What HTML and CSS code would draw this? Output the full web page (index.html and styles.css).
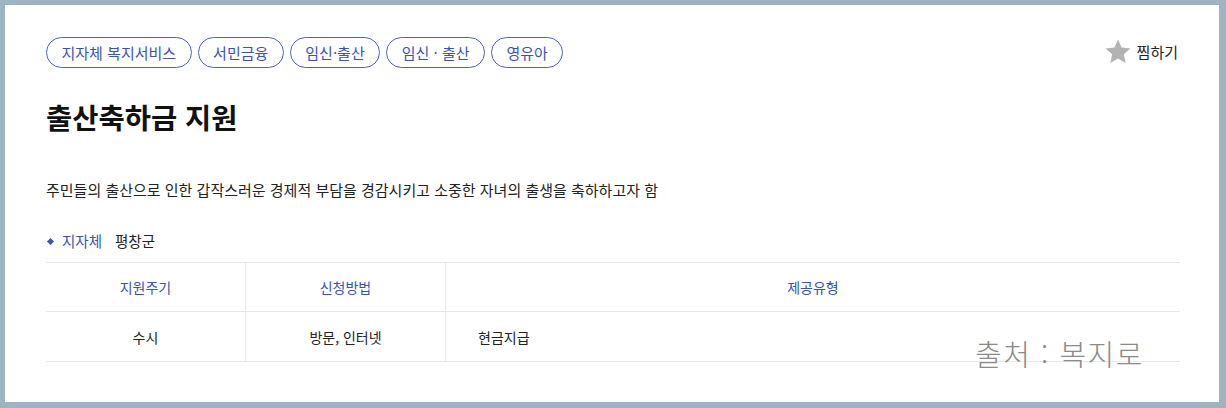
FILE: index.html
```html
<!DOCTYPE html>
<html lang="ko">
<head>
<meta charset="utf-8">
<link rel="stylesheet" href="styles.css">
</head>
<body>
<div class="frame">
  <div class="card">
    <div class="top">
      <ul class="tags">
        <li class="tag">지자체 복지서비스</li>
        <li class="tag">서민금융</li>
        <li class="tag">임신·출산</li>
        <li class="tag">임신 · 출산</li>
        <li class="tag">영유아</li>
      </ul>
      <div class="fav">
        <svg class="star" width="26" height="25" viewBox="0 0 26 25"><path d="M13 0.5l3.6 8 8.8 0.9-6.6 5.9 1.9 8.7L13 19.5 5.3 24l1.9-8.7L0.6 9.4l8.8-0.9z" fill="#b3b3b3"/></svg>
        <span>찜하기</span>
      </div>
    </div>
    <h1 class="title">출산축하금 지원</h1>
    <p class="desc">주민들의 출산으로 인한 갑작스러운 경제적 부담을 경감시키고 소중한 자녀의 출생을 축하하고자 함</p>
    <div class="meta"><span class="bullet"></span><span class="meta-label">지자체</span><span class="meta-value">평창군</span></div>
    <div class="table">
      <div class="cell head">지원주기</div>
      <div class="cell head">신청방법</div>
      <div class="cell head">제공유형</div>
      <div class="cell">수시</div>
      <div class="cell">방문, 인터넷</div>
      <div class="cell left">현금지급</div>
    </div>
    <div class="watermark">출처 : 복지로</div>
  </div>
</div>
</body>
</html>
```

FILE: styles.css
```css
* { box-sizing: border-box; }
html, body { margin: 0; padding: 0; }
body {
  background: #9fb4c3;
  font-family: "Noto Sans CJK KR", "Noto Sans", sans-serif;
  color: #222;
}
.frame {
  width: 1226px;
  height: 408px;
  padding: 5px 7px 6px 5px;
}
.card {
  position: relative;
  background: #fff;
  height: 100%;
  padding: 32px 39px 0 41px;
}
.top {
  display: flex;
  justify-content: space-between;
  align-items: flex-start;
}
.tags {
  display: flex;
  gap: 6px;
  list-style: none;
  margin: 0;
  padding: 0;
}
.tag {
  height: 31px;
  line-height: 29px;
  padding: 0 14.5px;
  border: 1px solid #4b63bf;
  border-radius: 16px;
  color: #3a52b4;
  font-size: 15px;
}
.fav {
  display: flex;
  align-items: center;
  gap: 6px;
  font-size: 15px;
  color: #222;
  height: 28px;
  margin-right: 2px;
}
.star { display: block; }
.title {
  margin: 30px 0 0;
  font-size: 28.5px;
  font-weight: 700;
  line-height: 38px;
  color: #111;
}
.desc {
  margin: 43px 0 0;
  font-size: 15px;
  line-height: 22px;
  color: #222;
}
.meta {
  display: flex;
  align-items: center;
  margin-top: 29px;
  font-size: 14px;
  line-height: 22px;
}
.bullet {
  width: 5px;
  height: 5px;
  background: #3d55b3;
  transform: rotate(45deg);
  margin: 0 9px 0 2px;
}
.meta-label { color: #3a52b4; margin-right: 13px; font-size: 14.5px; }
.meta-value { color: #222; font-size: 14.5px; }
.table {
  display: grid;
  grid-template-columns: 200px 200px 1fr;
  margin-top: 10px;
  border-top: 1px solid #e8e8e8;
}
.cell {
  height: 50px;
  display: flex;
  align-items: center;
  justify-content: center;
  font-size: 14px;
  border-bottom: 1px solid #e8e8e8;
  border-right: 1px solid #e8e8e8;
  color: #222;
}
.cell:nth-child(3n) { border-right: none; }
.cell.head { color: #3a52b4; height: 49px; }
.cell.left { justify-content: flex-start; padding-left: 32px; }
.watermark {
  position: absolute;
  left: 970px;
  top: 327px;
  font-size: 29px;
  font-weight: 300;
  color: #8a8a8a;
  letter-spacing: 1.5px;
}
```
